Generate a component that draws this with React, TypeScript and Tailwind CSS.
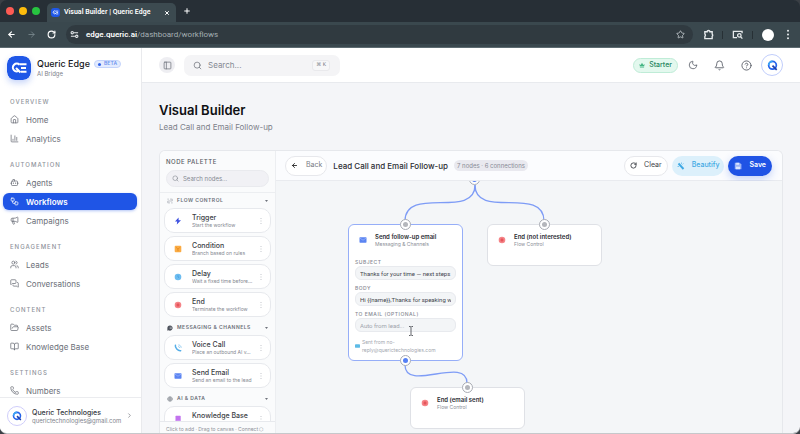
import type { ReactNode } from 'react';
import {
  ArrowLeft,
  ArrowRight,
  Bell,
  BookOpen,
  Bot,
  ChartColumn,
  ChevronRight,
  CircleHelp,
  FolderOpen,
  House,
  Megaphone,
  MessagesSquare,
  Moon,
  PanelLeft,
  Phone,
  Plus,
  RotateCw,
  Search,
  Star,
  Users,
  Workflow,
  X,
} from 'lucide-react';

const navSections = [
  {
    title: 'OVERVIEW',
    items: [
      { label: 'Home', icon: House },
      { label: 'Analytics', icon: ChartColumn },
    ],
  },
  {
    title: 'AUTOMATION',
    items: [
      { label: 'Agents', icon: Bot },
      { label: 'Workflows', icon: Workflow, active: true },
      { label: 'Campaigns', icon: Megaphone },
    ],
  },
  {
    title: 'ENGAGEMENT',
    items: [
      { label: 'Leads', icon: Users },
      { label: 'Conversations', icon: MessagesSquare },
    ],
  },
  {
    title: 'CONTENT',
    items: [
      { label: 'Assets', icon: FolderOpen },
      { label: 'Knowledge Base', icon: BookOpen },
    ],
  },
  {
    title: 'SETTINGS',
    items: [{ label: 'Numbers', icon: Phone }],
  },
];

const BoltIcon = () => (
  <svg viewBox="0 0 8 8" className="w-2 h-2">
    <path d="M4.6 0.4 1 4.500h2.200L2.8 7.6 7 3.300H4.600z" fill="#3b4fe0" />
  </svg>
);

const BranchIcon = () => (
  <svg viewBox="0 0 8 8" className="w-2 h-2">
    <rect x="0.7" y="0.7" width="6.6" height="6.6" rx="1" fill="#fbac45" />
    <path d="M2.2 2.4 4 4.2l1.8-1.8M4 4.2v2" stroke="#e2861c" strokeWidth="0.8" fill="none" />
  </svg>
);

const ClockIcon = () => (
  <svg viewBox="0 0 8 8" className="w-2 h-2">
    <circle cx="4" cy="4" r="3.3" fill="#6cbcf0" />
    <path d="M4 2.2V4l1.2 0.8" stroke="#3f9bdc" strokeWidth="0.7" fill="none" />
  </svg>
);

const StopIcon = () => (
  <svg viewBox="0 0 8 8" className="w-2 h-2">
    <circle cx="4" cy="4" r="3.3" fill="#f58488" />
    <rect x="2.6" y="2.6" width="2.8" height="2.8" rx="0.5" fill="#e5555b" />
  </svg>
);

const CallIcon = () => (
  <svg viewBox="0 0 8 8" className="w-2 h-2" fill="none" stroke="#55aee8">
    <path d="M1.4 1.2c-.6 2.6 2.5 5.900 5.300 5.500" strokeWidth="1.500" strokeLinecap="round" />
    <path d="M4.200 2.500c.8.1 1.300.6 1.400 1.400M4.300 0.900c1.700.1 2.800 1.200 2.900 2.900" strokeWidth="0.600" />
  </svg>
);

const MailIcon = () => (
  <svg viewBox="0 0 8 8" className="w-2 h-2">
    <rect x="0.5" y="1.3" width="7" height="5.400" rx="0.6" fill="#5b84f2" />
    <path d="M0.800 2l3.200 2.200L7.200 2" stroke="#a9c0fb" strokeWidth="0.600" fill="none" />
  </svg>
);

const BookIcon = () => (
  <svg viewBox="0 0 8 8" className="w-2 h-2">
    <rect x="1.500" y="0.800" width="5.200" height="6.400" rx="0.600" fill="#c273ee" />
    <path d="M2.300 6h4.400" stroke="#ecd3fb" strokeWidth="0.600" />
  </svg>
);

const FlowGlyph = () => (
  <svg viewBox="0 0 8 8" className="w-1.5 h-1.5" fill="none" stroke="#9aa0aa" strokeWidth="0.800">
    <path d="M0.500 1.500h2M4 1.500h3v2.500H1v2.500h3M5.500 6.500h2" />
  </svg>
);

const ChatGlyph = () => (
  <svg viewBox="0 0 8 8" className="w-1.5 h-1.5">
    <path d="M4 .5a3.500 3.500 0 1 1-2 6.400L.5 7.500V4A3.500 3.500 0 0 1 4 .5z" fill="#4d525c" />
    <path d="M3.500 3h3M3.500 4.600h3" stroke="#d5d7db" strokeWidth="0.700" />
  </svg>
);

const DataGlyph = () => (
  <svg viewBox="0 0 8 8" className="w-1.5 h-1.5" fill="none" stroke="#70757f" strokeWidth="0.800">
    <circle cx="4" cy="4" r="3" />
    <path d="M0.500 4h7M4 1.200C2.500 2.500 2.500 5.500 4 6.800M4 1.200c1.500 1.300 1.500 4.300 0 5.600" />
  </svg>
);

const paletteGroups = [
  {
    title: 'FLOW CONTROL',
    glyph: <FlowGlyph />,
    items: [
      { name: 'Trigger', text: 'Start the workflow', icon: <BoltIcon /> },
      { name: 'Condition', text: 'Branch based on rules', icon: <BranchIcon /> },
      { name: 'Delay', text: 'Wait a fixed time before…', icon: <ClockIcon /> },
      { name: 'End', text: 'Terminate the workflow', icon: <StopIcon /> },
    ],
  },
  {
    title: 'MESSAGING & CHANNELS',
    glyph: <ChatGlyph />,
    items: [
      { name: 'Voice Call', text: 'Place an outbound AI v…', icon: <CallIcon /> },
      { name: 'Send Email', text: 'Send an email to the lead', icon: <MailIcon /> },
    ],
  },
  {
    title: 'AI & DATA',
    glyph: <DataGlyph />,
    items: [{ name: 'Knowledge Base', text: 'Query knowledge base', icon: <BookIcon /> }],
  },
];

function EdgeLogo({ className }: { className: string }) {
  return (
    <svg viewBox="0 0 24 24" className={className}>
      <rect width="24" height="24" rx="8" fill="#1f57e7" />
      <g fill="none" stroke="#fff" strokeWidth="2.100">
        <path d="M12.500 8.700A3.900 3.900 0 1 0 12.300 14.500M9 12l4.500 4.500" />
        <path d="M12.500 8.300h7M14 12h5M14 15.700h5.500" />
      </g>
    </svg>
  );
}

function QMark({ className }: { className: string }) {
  return (
    <svg viewBox="0 0 12 12" className={className} fill="none">
      <circle cx="6" cy="5.800" r="4.200" stroke="#2563eb" strokeWidth="1.900" />
      <path d="M6 6.200l4.600 4.600" stroke="#1e3fae" strokeWidth="1.900" />
      <path d="M1.800 5.800A4.200 4.200 0 0 1 6 1.600" stroke="#38a5f5" strokeWidth="1.900" />
    </svg>
  );
}

function BrowserChrome() {
  return (
    <div className="shrink-0 font-['Roboto',sans-serif] text-white">
      <div className="flex h-[22px] items-end bg-[#272f36]">
        <div className="flex h-full w-[47px] items-center gap-[5px] pl-1.5">
          <span className="h-2 w-2 rounded-full bg-[#fe5b54]" />
          <span className="h-2 w-2 rounded-full bg-[#fdbc0c]" />
          <span className="h-2 w-2 rounded-full bg-[#27c440]" />
        </div>
        <div className="flex h-[19px] w-[129px] items-center rounded-t-[5px] bg-[#3c4a50] pl-1 pr-1.5">
          <EdgeLogo className="h-[9px] w-[9px]" />
          <span className="ml-1 flex-1 whitespace-nowrap text-[7px] font-semibold">Visual Builder | Queric Edge</span>
          <button aria-label="Close tab">
            <X className="h-1.5 w-1.5" strokeWidth={4} />
          </button>
        </div>
        <button aria-label="New tab" className="mb-[7px] ml-[7px]">
          <Plus className="h-2 w-2" strokeWidth={3} />
        </button>
      </div>
      <div className="flex h-[26px] items-center border-b border-[#5d6b71] bg-[#3a484e] pl-[7px] pr-2.5">
        <button aria-label="Back"><ArrowLeft className="h-[9px] w-[9px]" strokeWidth={3} /></button>
        <button aria-label="Forward" className="ml-[11px] text-[#829096]"><ArrowRight className="h-[9px] w-[9px]" strokeWidth={2} /></button>
        <button aria-label="Reload" className="ml-[11px]"><RotateCw className="h-[9px] w-[9px]" strokeWidth={3} /></button>
        <div className="ml-2.5 flex h-[19px] flex-1 items-center rounded-full bg-[#303a40] px-1">
          <svg viewBox="0 0 10 10" className="h-[9px] w-[9px]" fill="none" stroke="#e6eaec" strokeWidth="1.200">
            <circle cx="2.500" cy="3" r="1.300" />
            <path d="M4.500 3H9M1 7h4.500" />
            <circle cx="7.500" cy="7" r="1.300" />
          </svg>
          <span className="ml-[7px] flex-1 text-[8px] text-[#a5afb3]">
            <span className="font-semibold text-white">edge.queric.ai</span>/dashboard/workflows
          </span>
          <Star className="mr-1 h-[9px] w-[9px] text-[#cfd6d9]" />
        </div>
        <svg viewBox="0 0 12 12" className="ml-2.5 h-[11px] w-[11px]" fill="none" stroke="#e6eaec" strokeWidth="1.500">
          <path d="M2 3h2.500a1.500 1.300 0 0 1 3 0H10v2.500a1.300 1.500 0 0 1 0 2.500v2.500H2V8a1.500 1.500 0 0 0 0-2.500z" />
        </svg>
        <span className="ml-2 h-2 w-px bg-[#273035]" />
        <svg viewBox="0 0 12 12" className="ml-[9px] h-[11px] w-[11px]" fill="none" stroke="#e6eaec" strokeWidth="1.400">
          <path d="M5.500 9.500H1.500v-7h9.500v2" />
          <circle cx="8" cy="7" r="1.900" />
          <path d="M9.300 8.300 11.300 10.500" />
        </svg>
        <span className="ml-[9px] h-2 w-px bg-[#273035]" />
        <span className="ml-[9px] h-3 w-3 rounded-full bg-white" />
        <svg viewBox="0 0 4 12" className="ml-3 h-[11px] w-1" fill="#e6eaec">
          <circle cx="2" cy="2" r="1.100" />
          <circle cx="2" cy="6" r="1.100" />
          <circle cx="2" cy="10" r="1.100" />
        </svg>
      </div>
    </div>
  );
}

function Sidebar() {
  return (
    <aside className="flex w-[142px] shrink-0 flex-col border-r border-[#e9eaed] bg-white">
      <div className="flex items-start gap-1.5 pl-[7px] pt-2">
        <EdgeLogo className="h-6 w-6 rounded-[8px] shadow-[0_3px_6px_rgba(31,87,231,0.25)]" />
        <div className="pt-0.5">
          <div className="flex items-center gap-1">
            <span className="whitespace-nowrap text-[9px] font-medium leading-[12px] text-[#17181c]">Queric Edge</span>
            <span className="flex h-2 items-center gap-[3px] rounded-full border border-[#c4d4fb] bg-[#e3ebfe] px-[3px] text-[5px] font-semibold tracking-wide text-[#6f94ee]">
              <span className="h-[3px] w-[3px] rounded-full bg-[#2f62ea]" />
              BETA
            </span>
          </div>
          <div className="text-[6px] leading-[8px] text-[#7e828b]">AI Bridge</div>
        </div>
      </div>

      <nav className="min-h-0 flex-1 overflow-hidden pl-[3px] pr-1 pt-[17px]">
        {navSections.map((section) => (
          <div key={section.title} className="mb-[13px]">
            <h2 className="mb-[5px] px-[7px] text-[6px] leading-[9px] font-medium tracking-[1px] text-[#8f939b]">{section.title}</h2>
            <ul className="flex flex-col gap-0.5">
              {section.items.map((item) => (
                <li key={item.label}>
                  <a
                    href="#"
                    className={
                      'active' in item && item.active
                        ? 'flex h-[17px] items-center gap-[7px] rounded-[6px] bg-[#1f55e6] px-[7px] text-[8px] font-semibold text-white shadow-[0_1px_3px_rgba(31,85,230,0.35)]'
                        : 'flex h-[17px] items-center gap-[7px] rounded-[6px] px-[7px] text-[8px] text-[#6b6f78]'
                    }
                  >
                    <item.icon className="h-[9px] w-[9px]" strokeWidth={2} />
                    {item.label}
                  </a>
                </li>
              ))}
            </ul>
          </div>
        ))}
      </nav>

      <button className="flex h-9 shrink-0 items-center border-t border-[#ebecef] bg-white pl-[7px] pr-2 text-left">
        <span className="flex h-5 w-5 items-center justify-center rounded-full border border-[#cfcdfa]">
          <QMark className="h-2.5 w-2.5" />
        </span>
        <span className="ml-[5px] flex-1">
          <span className="block text-[7px] leading-[9px] font-medium text-[#34373e]">Queric Technologies</span>
          <span className="block text-[6px] leading-[7px] text-[#80848d]">querictechnologies@gmail.com</span>
        </span>
        <ChevronRight className="h-[7px] w-[7px] shrink-0 text-[#5f636c]" />
      </button>
    </aside>
  );
}

function TopBar() {
  return (
    <header className="flex h-[35px] shrink-0 items-center border-b border-[#e8eaee] bg-white pl-[17px] pr-[17px]">
      <button aria-label="Toggle sidebar" className="flex h-4 w-4 items-center justify-center rounded-full bg-[#eeeef2] text-[#70747d]">
        <PanelLeft className="h-[9px] w-[9px]" />
      </button>
      <label className="ml-[9px] flex h-[21px] w-[156px] items-center rounded-[7px] bg-[#f4f4f6] pl-[9px] pr-2.5 text-[#71757e]">
        <Search className="h-[9px] w-[9px]" />
        <input aria-label="Search" placeholder="Search..." className="ml-1.5 w-0 flex-1 bg-transparent text-[8px] outline-none placeholder:text-[#858992]" />
        <kbd className="flex h-[11px] items-center rounded-[3px] border border-[#e9e9ec] bg-[#f7f7f8] px-[3px] font-['DejaVu_Sans',sans-serif] text-[5px] text-[#777b84]">⌘ K</kbd>
      </label>
      <div className="ml-auto flex items-center text-[#5c606a]">
        <span className="flex h-[15px] items-center gap-1 rounded-full border border-[#bfecd7] bg-[#e3f8ee] px-[5px] text-[7px] font-medium text-[#25855e]">
          <svg viewBox="0 0 8 8" className="h-1.5 w-1.5" fill="#43b583">
            <path d="M.5 2.500 2.300 4 4 1l1.700 3 1.800-1.500L6.800 6H1.200zM1.200 6.500h5.600v.8H1.200z" />
          </svg>
          Starter
        </span>
        <button aria-label="Theme" className="ml-2.5"><Moon className="h-2.5 w-2.5" /></button>
        <button aria-label="Notifications" className="ml-4"><Bell className="h-[11px] w-[11px]" /></button>
        <button aria-label="Help" className="ml-4"><CircleHelp className="h-[11px] w-[11px]" /></button>
        <button aria-label="Account" className="ml-[9px] flex h-[22px] w-[22px] items-center justify-center rounded-full border border-[#c0cdfb]">
          <QMark className="h-[11px] w-[11px]" />
        </button>
      </div>
    </header>
  );
}

function Palette() {
  return (
    <div className="flex w-[116px] shrink-0 flex-col border-r border-[#eceef1] bg-[#fafbfc]">
      <div className="border-b border-[#eceef1] px-1.5 pb-[5px] pt-[7px]">
        <h2 className="mb-1 text-[6px] leading-[8px] font-medium tracking-[0.5px] text-[#565a63]">NODE PALETTE</h2>
        <label className="flex h-[17px] items-center gap-1 rounded-full border border-[#e9eaee] bg-[#f1f1f5] px-[5px] text-[#82868f]">
          <Search className="h-[7px] w-[7px]" />
          <input aria-label="Search nodes" placeholder="Search nodes..." className="w-0 flex-1 bg-transparent text-[6px] outline-none placeholder:text-[#858993]" />
        </label>
      </div>
      <div className="min-h-0 flex-1 overflow-hidden px-1 pt-[3px]">
        {paletteGroups.map((group) => (
          <section key={group.title} className="mb-1.5">
            <button className="mb-0.5 flex h-[10px] w-full items-center gap-1 px-[3px] text-[5px] font-semibold tracking-[0.5px] text-[#6b6f78]">
              {group.glyph}
              {group.title}
              <svg viewBox="0 0 6 4" className="ml-auto h-0.5 w-[3px]" fill="#70747d"><path d="M0 0h6L3 4z" /></svg>
            </button>
            <ul className="flex flex-col gap-[3px]">
              {group.items.map((item) => (
                <li key={item.name} className="flex h-[25px] items-center rounded-[10px] border border-[#e7e9ed] bg-white pl-[9px] pr-2">
                  {item.icon}
                  <div className="ml-2.5 min-w-0 flex-1">
                    <div className="text-[7px] leading-[9px] font-medium text-[#3b3e45]">{item.name}</div>
                    <div className="truncate text-[5px] leading-[7px] text-[#858992]">{item.text}</div>
                  </div>
                  <svg viewBox="0 0 2 6" className="h-1.5 w-0.5" fill="#c3c6cc">
                    <path d="M0.500 0h1v1h-1zM0.500 2.500h1v1h-1zM0.500 5h1v1h-1z" />
                  </svg>
                </li>
              ))}
            </ul>
          </section>
        ))}
      </div>
      <div className="flex h-3 shrink-0 items-end whitespace-nowrap border-t border-[#e7e9ed] px-1.5 text-[5px] leading-[7px] text-[#8d9199]">
        Click to add · Drag to canvas · Connect ⬡
      </div>
    </div>
  );
}

function Handle({ className, live = false }: { className: string; live?: boolean }) {
  return (
    <span className={`absolute flex h-[11px] w-[11px] items-center justify-center rounded-full border border-[#a9acb4] bg-white ${className}`}>
      <span className={live ? 'h-[5px] w-[5px] rounded-full bg-[#5580f5]' : 'h-[5px] w-[5px] rounded-full bg-[#b4b6bb]'} />
    </span>
  );
}

function NodeHeader({ icon, title, group }: { icon: ReactNode; title: string; group: string }) {
  return (
    <div className="flex items-center gap-2">
      {icon}
      <div>
        <div className="whitespace-nowrap text-[6px] leading-[9px] font-semibold text-[#2c2e34]">{title}</div>
        <div className="whitespace-nowrap text-[5px] leading-[7px] text-[#8a8e97]">{group}</div>
      </div>
    </div>
  );
}

function NodeField({ id, label, value, placeholder }: { id: string; label: string; value?: string; placeholder?: string }) {
  return (
    <div className="mb-1">
      <label htmlFor={id} className="block text-[5px] leading-[8px] font-medium tracking-[0.5px] text-[#868a93]">{label}</label>
      <input
        id={id}
        defaultValue={value}
        placeholder={placeholder}
        className="block h-[14px] w-full rounded-[6px] border border-[#e8eaee] bg-[#f3f5f7] px-1 font-['Roboto',sans-serif] text-[6px] text-[#43464e] outline-none placeholder:text-[#a0a4ac]"
      />
    </div>
  );
}

function Canvas() {
  return (
    <div className="relative min-h-0 flex-1 overflow-hidden bg-[#f4f6f8]">
      <svg className="absolute left-0 top-0 h-[253px] w-[506px]" fill="none" stroke="#7e9cf6" strokeWidth="1.300">
        <path d="M199 4C199 39 129 4 129 40" />
        <path d="M199 4C199 39 268 4 268 40" />
        <path d="M129 184C129 212 191 174 191 202" />
      </svg>
      <Handle live className="left-[193px] top-[-7px]" />

      <div className="absolute left-[72px] top-[43px] w-[115px] rounded-[6px] border border-[#96aef8] bg-white px-1.5 pb-1.5 pt-[7px]">
        <Handle className="left-[51px] top-[-6px]" />
        <div className="mb-2.5 pl-1">
          <NodeHeader icon={<MailIcon />} title="Send follow-up email" group="Messaging & Channels" />
        </div>
        <NodeField id="subject" label="SUBJECT" value="Thanks for your time — next steps" />
        <NodeField id="body" label="BODY" value="Hi {{name}},Thanks for speaking with us" />
        <NodeField id="to-email" label="TO EMAIL (OPTIONAL)" placeholder="Auto from lead..." />
        <div className="mt-1.5 flex items-center gap-0.5 text-[5px] leading-[8px] text-[#a3a7af]">
          <svg viewBox="0 0 6 4" className="h-1 w-[5px] shrink-0"><rect width="6" height="4" rx="0.500" fill="#5dbbe6" /></svg>
          <span>Sent from no-<br />reply@querictechnologies.com</span>
        </div>
        <Handle live className="bottom-[-6px] left-[51px]" />
      </div>

      <div className="absolute left-[211px] top-[43px] h-[42px] w-[115px] rounded-[6px] border border-[#dfe1e6] bg-white px-2.5 pt-[7px]">
        <Handle className="left-[51px] top-[-6px]" />
        <NodeHeader icon={<StopIcon />} title="End (not interested)" group="Flow Control" />
      </div>

      <div className="absolute left-[134px] top-[206px] h-[42px] w-[115px] rounded-[6px] border border-[#dfe1e6] bg-white px-2.5 pt-[7px]">
        <Handle className="left-[51px] top-[-6px]" />
        <NodeHeader icon={<StopIcon />} title="End (email sent)" group="Flow Control" />
      </div>

      {/* text cursor */}
      <svg viewBox="0 0 6 10" className="absolute left-[132px] top-[145px] h-2.5 w-1.5" fill="none" stroke="#3c3f46" strokeWidth="0.800">
        <path d="M1 .5h1.300L3 1.200l.7-.7H5M3 1.200v7.600M1 9.500h1.300L3 8.800l.7.7H5" />
      </svg>
    </div>
  );
}

function Builder() {
  return (
    <div className="flex min-w-0 flex-1 flex-col">
      <div className="flex h-[30px] shrink-0 items-center border-b border-[#e9ebef] bg-[#fbfcfe] pl-[9px] pr-2.5">
        <button className="flex h-5 items-center gap-2 rounded-full border border-[#e7e8ec] bg-white px-1 pl-[5px] text-[7px] text-[#777b84]">
          <ArrowLeft className="h-[7px] w-[7px] text-[#222]" strokeWidth={3} />
          Back
        </button>
        <h2 className="ml-1.5 whitespace-nowrap text-[8px] font-medium text-[#2b2d33]">Lead Call and Email Follow-up</h2>
        <span className="ml-1.5 flex h-[11px] items-center whitespace-nowrap rounded-full bg-[#e9e9ef] px-[3px] text-[6px] text-[#888b96]">7 nodes · 6 connections</span>
        <div className="ml-auto flex gap-1">
          <button className="flex h-5 items-center gap-[7px] rounded-full border border-[#e7e8ec] bg-white px-[5px] text-[7px] text-[#3d4047]">
            <RotateCw className="h-[7px] w-[7px]" strokeWidth={3} />
            Clear
          </button>
          <button className="flex h-5 items-center gap-[7px] rounded-full bg-[#dcf0fb] px-[5px] text-[7px] font-medium text-[#3fa9e4]">
            <svg viewBox="0 0 8 8" className="h-2 w-2" stroke="#3fa9e4">
              <path d="M1.500 1.500l5 5.500" strokeWidth="1.900" />
              <path d="M4.500.5v1.600M.5 4.500h1.500M5.500 2.500l1-1" strokeWidth="0.600" />
            </svg>
            Beautify
          </button>
          <button className="flex h-5 items-center gap-[7px] rounded-full bg-[#1f53e5] px-1.5 text-[7px] font-semibold text-white shadow-[0_3px_8px_rgba(31,83,229,0.25)]">
            <svg viewBox="0 0 8 8" className="h-2 w-2">
              <path d="M.8.8H5.800L7.400 2.400V7.300H.8z" fill="#9db5f7" />
              <path d="M2.200.8v2h2.800v-2M2 7.300V4.700h4v2.600" fill="#dde6fe" />
            </svg>
            Save
          </button>
        </div>
      </div>
      <Canvas />
    </div>
  );
}

export default function App() {
  return (
    <div className="h-screen bg-[#3a3f45] font-['Inter',sans-serif]">
      <div className="flex h-full flex-col overflow-hidden rounded-[7px] border-b border-[#c6c8cb]">
        <BrowserChrome />
        <div className="flex min-h-0 flex-1">
          <Sidebar />
          <div className="flex min-w-0 flex-1 flex-col bg-[#f4f5f8]">
            <TopBar />
            <main className="flex min-h-0 flex-1 flex-col pl-[17px] pr-[17px] pt-[18px]">
              <h1 className="text-[13px] leading-[18px] font-semibold text-[#0f1013]">Visual Builder</h1>
              <p className="mt-[3px] text-[8px] leading-[10px] text-[#7d818a]">Lead Call and Email Follow-up</p>
              <div className="mt-[18px] flex min-h-0 flex-1 overflow-hidden rounded-t-[6px] border border-b-0 border-[#e6e8ec]">
                <Palette />
                <Builder />
              </div>
            </main>
          </div>
        </div>
      </div>
    </div>
  );
}
